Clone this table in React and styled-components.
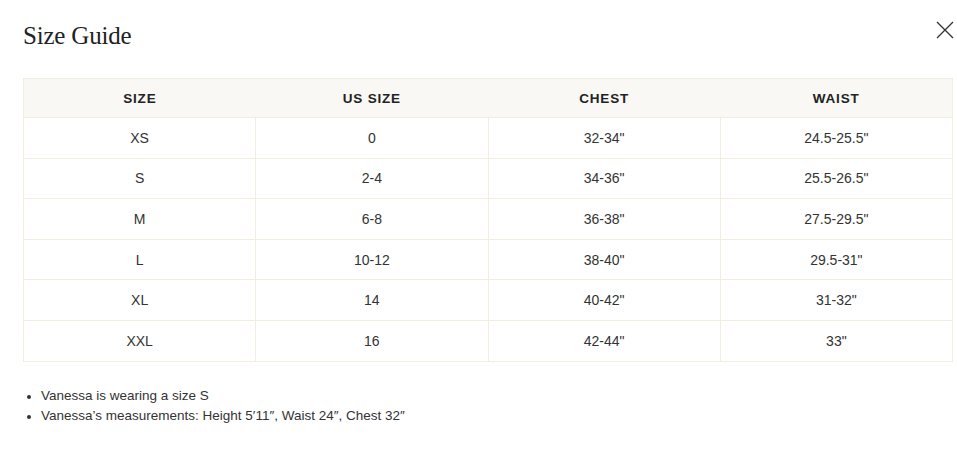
import React from "react";
import styled, { createGlobalStyle } from "styled-components";

const GlobalStyle = createGlobalStyle`
  body {
    margin: 0;
    background: #fff;
    font-family: "Liberation Sans", Arial, sans-serif;
    color: #222;
  }
`;

const ModalStyled = styled.div`
  width: 957px;
  height: 462px;
  box-sizing: border-box;
  padding: 20px 2px 0 23px;
`;

const HeaderStyled = styled.div`
  display: flex;
  justify-content: space-between;
  align-items: flex-start;
  height: 58px;
`;

const TitleStyled = styled.h2`
  margin: 2px 0 0;
  font-family: "Liberation Serif", "DejaVu Serif", serif;
  font-weight: normal;
  font-size: 25px;
  letter-spacing: -0.2px;
  color: #222;
`;

const CloseButton = styled.button`
  border: none;
  background: none;
  padding: 0;
  margin: 0;
  width: 20px;
  height: 20px;
  cursor: pointer;
  display: flex;
`;

const TableStyled = styled.table`
  width: 930px;
  border-collapse: collapse;
  table-layout: fixed;
  font-size: 14px;
  color: #333;
`;

const HeadCell = styled.th`
  height: 38px;
  padding: 0;
  background: #f9f8f4;
  border: 1px solid #f1ede1;
  border-left: none;
  border-right: none;
  font-weight: bold;
  font-size: 13.5px;
  letter-spacing: 0.8px;
  color: #222;
  &:first-child {
    border-left: 1px solid #f1ede1;
  }
  &:last-child {
    border-right: 1px solid #f1ede1;
  }
`;

const Cell = styled.td`
  height: 39.6px;
  text-align: center;
  border: 1px solid #f1ede1;
  padding: 0;
`;

const NotesStyled = styled.ul`
  margin: 24px 0 0;
  padding-left: 18px;
  font-size: 13.5px;
  line-height: 20px;
  color: #333;
  li::marker {
    font-size: 12px;
  }
`;

const rows = [
  ["XS", "0", "32-34\"", "24.5-25.5\""],
  ["S", "2-4", "34-36\"", "25.5-26.5\""],
  ["M", "6-8", "36-38\"", "27.5-29.5\""],
  ["L", "10-12", "38-40\"", "29.5-31\""],
  ["XL", "14", "40-42\"", "31-32\""],
  ["XXL", "16", "42-44\"", "33\""],
];

const App = () => {
  return (
    <ModalStyled>
      <GlobalStyle />
      <HeaderStyled>
        <TitleStyled>Size Guide</TitleStyled>
        <CloseButton aria-label="Close">
          <svg width="20" height="20" viewBox="0 0 20 20">
            <path d="M2 2 L18 18 M18 2 L2 18" stroke="#333" strokeWidth="1.3" />
          </svg>
        </CloseButton>
      </HeaderStyled>
      <TableStyled>
        <thead>
          <tr>
            <HeadCell>SIZE</HeadCell>
            <HeadCell>US SIZE</HeadCell>
            <HeadCell>CHEST</HeadCell>
            <HeadCell>WAIST</HeadCell>
          </tr>
        </thead>
        <tbody>
          {rows.map((row) => (
            <tr key={row[0]}>
              {row.map((val, i) => (
                <Cell key={i}>{val}</Cell>
              ))}
            </tr>
          ))}
        </tbody>
      </TableStyled>
      <NotesStyled>
        <li>Vanessa is wearing a size S</li>
        <li>Vanessa’s measurements: Height 5′11″, Waist 24″, Chest 32″</li>
      </NotesStyled>
    </ModalStyled>
  );
};

export default App;
